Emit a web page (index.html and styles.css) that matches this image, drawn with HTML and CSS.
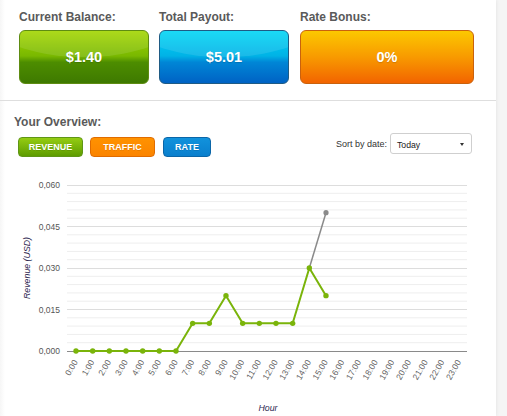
FILE: index.html
```html
<!DOCTYPE html>
<html>
<head>
<meta charset="utf-8">
<link rel="stylesheet" href="styles.css">
</head>
<body>
<main class="panel">
  <section class="stats">
    <div class="stat stat-balance">
      <div class="stat-label">Current Balance:</div>
      <div class="stat-box box-green">$1.40</div>
    </div>
    <div class="stat stat-payout">
      <div class="stat-label">Total Payout:</div>
      <div class="stat-box box-blue">$5.01</div>
    </div>
    <div class="stat stat-bonus">
      <div class="stat-label">Rate Bonus:</div>
      <div class="stat-box box-orange">0%</div>
    </div>
  </section>
  <section class="overview">
    <div class="overview-head">
      <div class="overview-left">
        <div class="overview-title">Your Overview:</div>
        <div class="tabs">
          <span class="tab tab-revenue">Revenue</span>
          <span class="tab tab-traffic">Traffic</span>
          <span class="tab tab-rate">Rate</span>
        </div>
      </div>
      <div class="sort">
        <span class="sort-label">Sort by date:</span>
        <div class="select"><span class="select-value">Today</span><span class="select-arrow"></span></div>
      </div>
    </div>
    <svg class="chart" width="496" height="251" viewBox="0 0 496 251">
      <g class="grid-minor">
        <line x1="67" x2="467" y1="28.3" y2="28.3"/>
        <line x1="67" x2="467" y1="36.6" y2="36.6"/>
        <line x1="67" x2="467" y1="44.9" y2="44.9"/>
        <line x1="67" x2="467" y1="53.2" y2="53.2"/>
        <line x1="67" x2="467" y1="69.8" y2="69.8"/>
        <line x1="67" x2="467" y1="78.1" y2="78.1"/>
        <line x1="67" x2="467" y1="86.4" y2="86.4"/>
        <line x1="67" x2="467" y1="94.7" y2="94.7"/>
        <line x1="67" x2="467" y1="111.3" y2="111.3"/>
        <line x1="67" x2="467" y1="119.6" y2="119.6"/>
        <line x1="67" x2="467" y1="127.9" y2="127.9"/>
        <line x1="67" x2="467" y1="136.2" y2="136.2"/>
        <line x1="67" x2="467" y1="152.8" y2="152.8"/>
        <line x1="67" x2="467" y1="161.1" y2="161.1"/>
        <line x1="67" x2="467" y1="169.4" y2="169.4"/>
        <line x1="67" x2="467" y1="177.7" y2="177.7"/>
      </g>
      <g class="grid-major">
        <line x1="67" x2="467" y1="20.5" y2="20.5"/>
        <line x1="67" x2="467" y1="61.5" y2="61.5"/>
        <line x1="67" x2="467" y1="103.5" y2="103.5"/>
        <line x1="67" x2="467" y1="144.5" y2="144.5"/>
      </g>
      <line class="axis" x1="67" x2="467" y1="186.5" y2="186.5"/>
      <g class="y-labels">
        <text x="60" y="23">0,060</text>
        <text x="60" y="64.5">0,045</text>
        <text x="60" y="106">0,030</text>
        <text x="60" y="147.5">0,015</text>
        <text x="60" y="189">0,000</text>
      </g>
      <text class="axis-title" transform="translate(29.5,103) rotate(-90)">Revenue (USD)</text>
      <g class="x-labels">
        <text transform="translate(78,197) rotate(-60)">0:00</text>
        <text transform="translate(94.67,197) rotate(-60)">1:00</text>
        <text transform="translate(111.33,197) rotate(-60)">2:00</text>
        <text transform="translate(128,197) rotate(-60)">3:00</text>
        <text transform="translate(144.67,197) rotate(-60)">4:00</text>
        <text transform="translate(161.33,197) rotate(-60)">5:00</text>
        <text transform="translate(178,197) rotate(-60)">6:00</text>
        <text transform="translate(194.67,197) rotate(-60)">7:00</text>
        <text transform="translate(211.33,197) rotate(-60)">8:00</text>
        <text transform="translate(228,197) rotate(-60)">9:00</text>
        <text transform="translate(244.67,197) rotate(-60)">10:00</text>
        <text transform="translate(261.33,197) rotate(-60)">11:00</text>
        <text transform="translate(278,197) rotate(-60)">12:00</text>
        <text transform="translate(294.67,197) rotate(-60)">13:00</text>
        <text transform="translate(311.33,197) rotate(-60)">14:00</text>
        <text transform="translate(328,197) rotate(-60)">15:00</text>
        <text transform="translate(344.67,197) rotate(-60)">16:00</text>
        <text transform="translate(361.33,197) rotate(-60)">17:00</text>
        <text transform="translate(378,197) rotate(-60)">18:00</text>
        <text transform="translate(394.67,197) rotate(-60)">19:00</text>
        <text transform="translate(411.33,197) rotate(-60)">20:00</text>
        <text transform="translate(428,197) rotate(-60)">21:00</text>
        <text transform="translate(444.67,197) rotate(-60)">22:00</text>
        <text transform="translate(461.33,197) rotate(-60)">23:00</text>
      </g>
      <text class="axis-title" x="268" y="246" text-anchor="middle">Hour</text>
      <polyline class="series-gray" points="309.33,103 326,47.67"/>
      <circle class="dot-gray" cx="326" cy="47.67" r="2.6"/>
      <polyline class="series-green" points="76,186 92.67,186 109.33,186 126,186 142.67,186 159.33,186 176,186 192.67,158.33 209.33,158.33 226,130.67 242.67,158.33 259.33,158.33 276,158.33 292.67,158.33 309.33,103 326,130.67"/>
      <g class="dots-green">
        <circle cx="76" cy="186" r="2.7"/>
        <circle cx="92.67" cy="186" r="2.7"/>
        <circle cx="109.33" cy="186" r="2.7"/>
        <circle cx="126" cy="186" r="2.7"/>
        <circle cx="142.67" cy="186" r="2.7"/>
        <circle cx="159.33" cy="186" r="2.7"/>
        <circle cx="176" cy="186" r="2.7"/>
        <circle cx="192.67" cy="158.33" r="2.7"/>
        <circle cx="209.33" cy="158.33" r="2.7"/>
        <circle cx="226" cy="130.67" r="2.7"/>
        <circle cx="242.67" cy="158.33" r="2.7"/>
        <circle cx="259.33" cy="158.33" r="2.7"/>
        <circle cx="276" cy="158.33" r="2.7"/>
        <circle cx="292.67" cy="158.33" r="2.7"/>
        <circle cx="309.33" cy="103" r="2.7"/>
        <circle cx="326" cy="130.67" r="2.7"/>
      </g>
    </svg>
  </section>
</main>
</body>
</html>
```

FILE: styles.css
```css
* { box-sizing: border-box; }
html, body { margin: 0; padding: 0; }
body {
  background: #f5f5f5;
  font-family: "Liberation Sans", Arial, sans-serif;
  overflow: hidden;
}
.panel {
  width: 496px;
  min-height: 416px;
  background: linear-gradient(to right, #f6f6f6, #ffffff 5px);
  box-shadow: 0 0 4px rgba(0,0,0,0.09);
}
.stats {
  display: flex;
  gap: 10px;
  padding: 10px 0 16px 19px;
  border-bottom: 1px solid #dedede;
}
.stat-balance, .stat-payout { width: 130px; }
.stat-bonus { width: 174px; margin-left: 1px; }
.stat-label {
  font-size: 12px;
  line-height: 15px;
  color: #5a5a5a;
  font-weight: bold;
}
.stat-box {
  position: relative;
  overflow: hidden;
  margin-top: 5px;
  height: 54px;
  border-radius: 6px;
  border: 1px solid;
  display: flex;
  align-items: center;
  justify-content: center;
  color: #fff;
  font-weight: bold;
  font-size: 14.5px;
  text-shadow: 0 1px 1px rgba(0,0,0,0.15);
}
.stat-box::before {
  content: "";
  position: absolute;
  left: -30%;
  right: -30%;
  top: -120%;
  height: 170%;
  border-radius: 50%;
  background: rgba(255,255,255,0.10);
}
.box-green {
  background: linear-gradient(#a3d600, #79b800 48%, #4d8d00 60%, #3e7900);
  border-color: #5e8c12;
}
.box-blue {
  background: linear-gradient(#00d6f5, #00b2e6 48%, #0086d6 60%, #0062c4);
  border-color: #1f5b84;
}
.box-orange {
  background: linear-gradient(#fcc800, #f89a00 50%, #f26400);
  border-color: #c9620d;
}
.box-orange::before { display: none; }

.overview-head {
  display: flex;
  justify-content: space-between;
  align-items: flex-end;
  padding: 14px 24px 0 14px;
}
.overview-title {
  font-size: 12px;
  font-weight: bold;
  line-height: 15px;
  color: #5a5a5a;
}
.tabs {
  display: flex;
  gap: 7px;
  margin: 7px 0 0 4px;
}
.tab {
  height: 20px;
  padding: 0 10px;
  border-radius: 4px;
  border: 1px solid;
  color: #fff;
  font-size: 9px;
  font-weight: bold;
  text-transform: uppercase;
  display: flex;
  align-items: center;
  justify-content: center;
  text-shadow: 0 1px 0 rgba(0,0,0,0.1);
}
.tab-revenue {
  width: 65px;
  background: linear-gradient(#94cc12, #5e9c00);
  border-color: #5f9616;
}
.tab-traffic {
  width: 65px;
  background: linear-gradient(#ff9200, #fb8400);
  border-color: #e06c00;
}
.tab-rate {
  width: 48px;
  margin-left: 1px;
  background: linear-gradient(#1192dc, #0a7fcd);
  border-color: #0b66a8;
}
.sort {
  display: flex;
  align-items: center;
  gap: 3px;
  margin-bottom: 3px;
}
.sort-label {
  font-size: 9px;
  color: #333;
}
.select {
  width: 82px;
  height: 21px;
  border: 1px solid #cfcfcf;
  border-radius: 3px;
  background: #fff;
  display: flex;
  align-items: center;
  justify-content: space-between;
  padding: 2px 7px 0 6px;
}
.select-value {
  font-size: 8.7px;
  color: #222;
}
.select-arrow {
  width: 0;
  height: 0;
  border-left: 2px solid transparent;
  border-right: 2px solid transparent;
  border-top: 3px solid #333;
}
.chart {
  display: block;
  margin-top: 8px;
  font-family: "Liberation Sans", Arial, sans-serif;
}
.grid-minor line { stroke: #eeeeee; stroke-width: 1; }
.grid-major line { stroke: #dddddd; stroke-width: 1; }
.axis { stroke: #8a8a8a; stroke-width: 1; }
.y-labels text {
  font-size: 8.5px;
  fill: #555;
  text-anchor: end;
}
.x-labels text {
  font-size: 8.5px;
  fill: #606060;
  text-anchor: end;
}
.axis-title {
  font-size: 8.8px;
  font-style: italic;
  fill: #2f2850;
  text-anchor: middle;
}
.series-green {
  fill: none;
  stroke: #7ab40a;
  stroke-width: 2;
  stroke-linejoin: round;
}
.series-gray {
  fill: none;
  stroke: #8a8a8a;
  stroke-width: 1.5;
}
.dot-gray { fill: #8a8a8a; }
.dots-green circle { fill: #7ab40a; }
```
